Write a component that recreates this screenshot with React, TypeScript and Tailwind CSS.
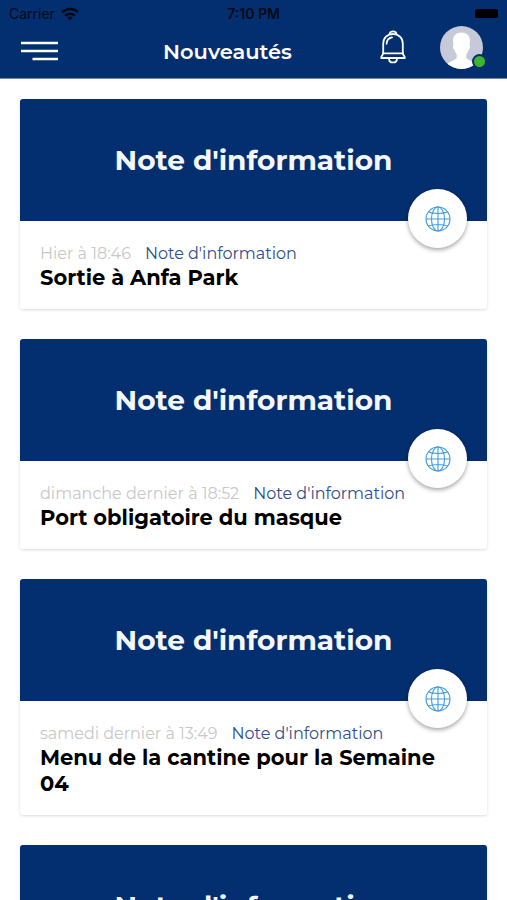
import * as React from "react"

type Post = {
  id: number
  category: string
  date?: string
  title?: string
}

const posts: Post[] = [
  { id: 1, category: "Note d'information", date: "Hier à 18:46", title: "Sortie à Anfa Park" },
  { id: 2, category: "Note d'information", date: "dimanche dernier à 18:52", title: "Port obligatoire du masque" },
  { id: 3, category: "Note d'information", date: "samedi dernier à 13:49", title: "Menu de la cantine pour la Semaine 04" },
  { id: 4, category: "Note d'information" },
]

function WifiIcon() {
  return (
    <svg viewBox="0 0 18 14" className="h-[14px] w-[18px]" fill="none" stroke="currentColor" strokeWidth="2.6">
      <path d="M1 5.2a11.500 11.500 0 0 1 16 0" />
      <path d="M4.200 8.600a7 7 0 0 1 9.600 0" />
      <path d="M9 13.600 6.300 10.800a3.900 3.900 0 0 1 5.400 0z" fill="currentColor" stroke="none" />
    </svg>
  )
}

function MenuIcon() {
  return (
    <svg viewBox="0 0 37 20" className="h-5 w-[37px]" fill="none" stroke="currentColor" strokeWidth="2.6">
      <path d="M0 2h37M0 10h37M11.500 18h25.500" />
    </svg>
  )
}

function BellIcon() {
  return (
    <svg viewBox="0 0 28 34" className="h-[34px] w-7" fill="none" stroke="currentColor" strokeWidth="1.8" strokeLinecap="round" strokeLinejoin="round">
      <path d="M10.600 4.200c0-3.900 6.800-3.900 6.800 0" />
      <path d="M4.200 23.400v-9.700c0-5.800 4.200-9.700 9.800-9.700s9.800 3.900 9.800 9.700v9.700" />
      <path d="M4 23.400h20c0 2 1.800 2.300 1.800 4.600H2.200c0-2.300 1.800-2.600 1.800-4.600z" />
      <path d="M10 28.400c0 5.400 8 5.400 8 0" />
      <path d="M7.600 13.800c.1-3.600 2.200-5.800 5.400-6.400" />
    </svg>
  )
}

function Avatar() {
  return (
    <svg viewBox="0 0 43 43" className="size-[43px] rounded-full">
      <rect width="43" height="43" fill="#c5c9d8" />
      <path
        d="M21.500 6.500c5.200 0 8.600 2.900 8.400 8.300l-.3 4.700c.9.600.2 3.800-1 4.300-.5 1.900-1.200 3.300-2.300 4.600v3.300c.8 2.600 6.900 3 9.700 6.800V45H7v-6.500c2.800-3.800 8.900-4.200 9.700-6.800v-3.300c-1.100-1.300-1.800-2.700-2.300-4.600-1.200-.5-1.900-3.700-1-4.300l-.3-4.700c-.2-5.400 3.200-8.300 8.400-8.300z"
        fill="#fff"
      />
    </svg>
  )
}

function GlobeIcon() {
  return (
    <svg viewBox="0 0 26 26" className="size-[26px]" fill="none" stroke="#429bda" strokeWidth="1.1">
      <circle cx="13" cy="13" r="12" />
      <ellipse cx="13" cy="13" rx="6.500" ry="12" />
      <path d="M13 1v24M1 13h24M3.500 6c5 2 14 2 19 0M3.500 20c5-2 14-2 19 0" />
    </svg>
  )
}

function Header() {
  return (
    <header className="shrink-0 border-b border-[#6f87b3] bg-[#032e6f] text-white">
      <div className="grid h-[27px] grid-cols-3 items-center px-[9px] font-[Inter,sans-serif] text-[#020a18]">
        <div className="flex items-center gap-1.5 text-sm">
          <span>Carrier</span>
          <WifiIcon />
        </div>
        <span className="text-center text-sm font-semibold">7:10 PM</span>
        <span className="h-[9px] w-[23px] justify-self-end rounded-xs bg-black" />
      </div>
      <div className="flex h-[51px] items-start justify-between pr-6 pl-[21px]">
        <button type="button" aria-label="Menu" className="flex h-12 w-[55px] items-center">
          <MenuIcon />
        </button>
        <h1 className="flex h-[50px] items-center text-[21px] font-semibold">Nouveautés</h1>
        <div className="flex gap-[33px]">
          <button type="button" aria-label="Notifications" className="flex h-10 items-center">
            <BellIcon />
          </button>
          <button type="button" aria-label="Profil" className="relative flex h-10 items-center">
            <Avatar />
            <span className="absolute -right-1 -bottom-0.5 size-[15px] rounded-full border-2 border-[#032e6f] bg-[#3db52f]" />
          </button>
        </div>
      </div>
    </header>
  )
}

function PostCard({ post }: { post: Post }) {
  return (
    <article className="rounded-[3px] bg-white shadow-[0_1px_3px_rgba(0,0,0,0.14)]">
      <div className="relative flex h-[122px] items-center justify-center rounded-t-[3px] bg-[#032e6f]">
        <span className="text-[28px] font-bold text-[#f4f7ff]">{post.category}</span>
        <span className="absolute right-5 -bottom-[27px] flex size-[59px] items-center justify-center rounded-full bg-white shadow-[0_2px_4px_rgba(0,0,0,0.35)]">
          <GlobeIcon />
        </span>
      </div>
      {post.title && (
        <div className="px-5 pt-[22px] pb-[18px]">
          <p className="flex gap-[14px] text-base leading-[22px]">
            <time className="text-[#c8c8c8]">{post.date}</time>
            <a href="#" className="text-[#2f4d88]">{post.category}</a>
          </p>
          <h2 className="text-[21px] leading-[26px] font-bold text-black">{post.title}</h2>
        </div>
      )}
    </article>
  )
}

export default function App() {
  return (
    <div className="flex h-screen flex-col bg-white font-[Montserrat,Inter,sans-serif]">
      <Header />
      <main className="flex-1 overflow-y-auto px-5 py-5 [scrollbar-width:none]">
        <div className="flex flex-col gap-[30px]">
          {posts.map((post) => (
            <PostCard key={post.id} post={post} />
          ))}
        </div>
      </main>
    </div>
  )
}
